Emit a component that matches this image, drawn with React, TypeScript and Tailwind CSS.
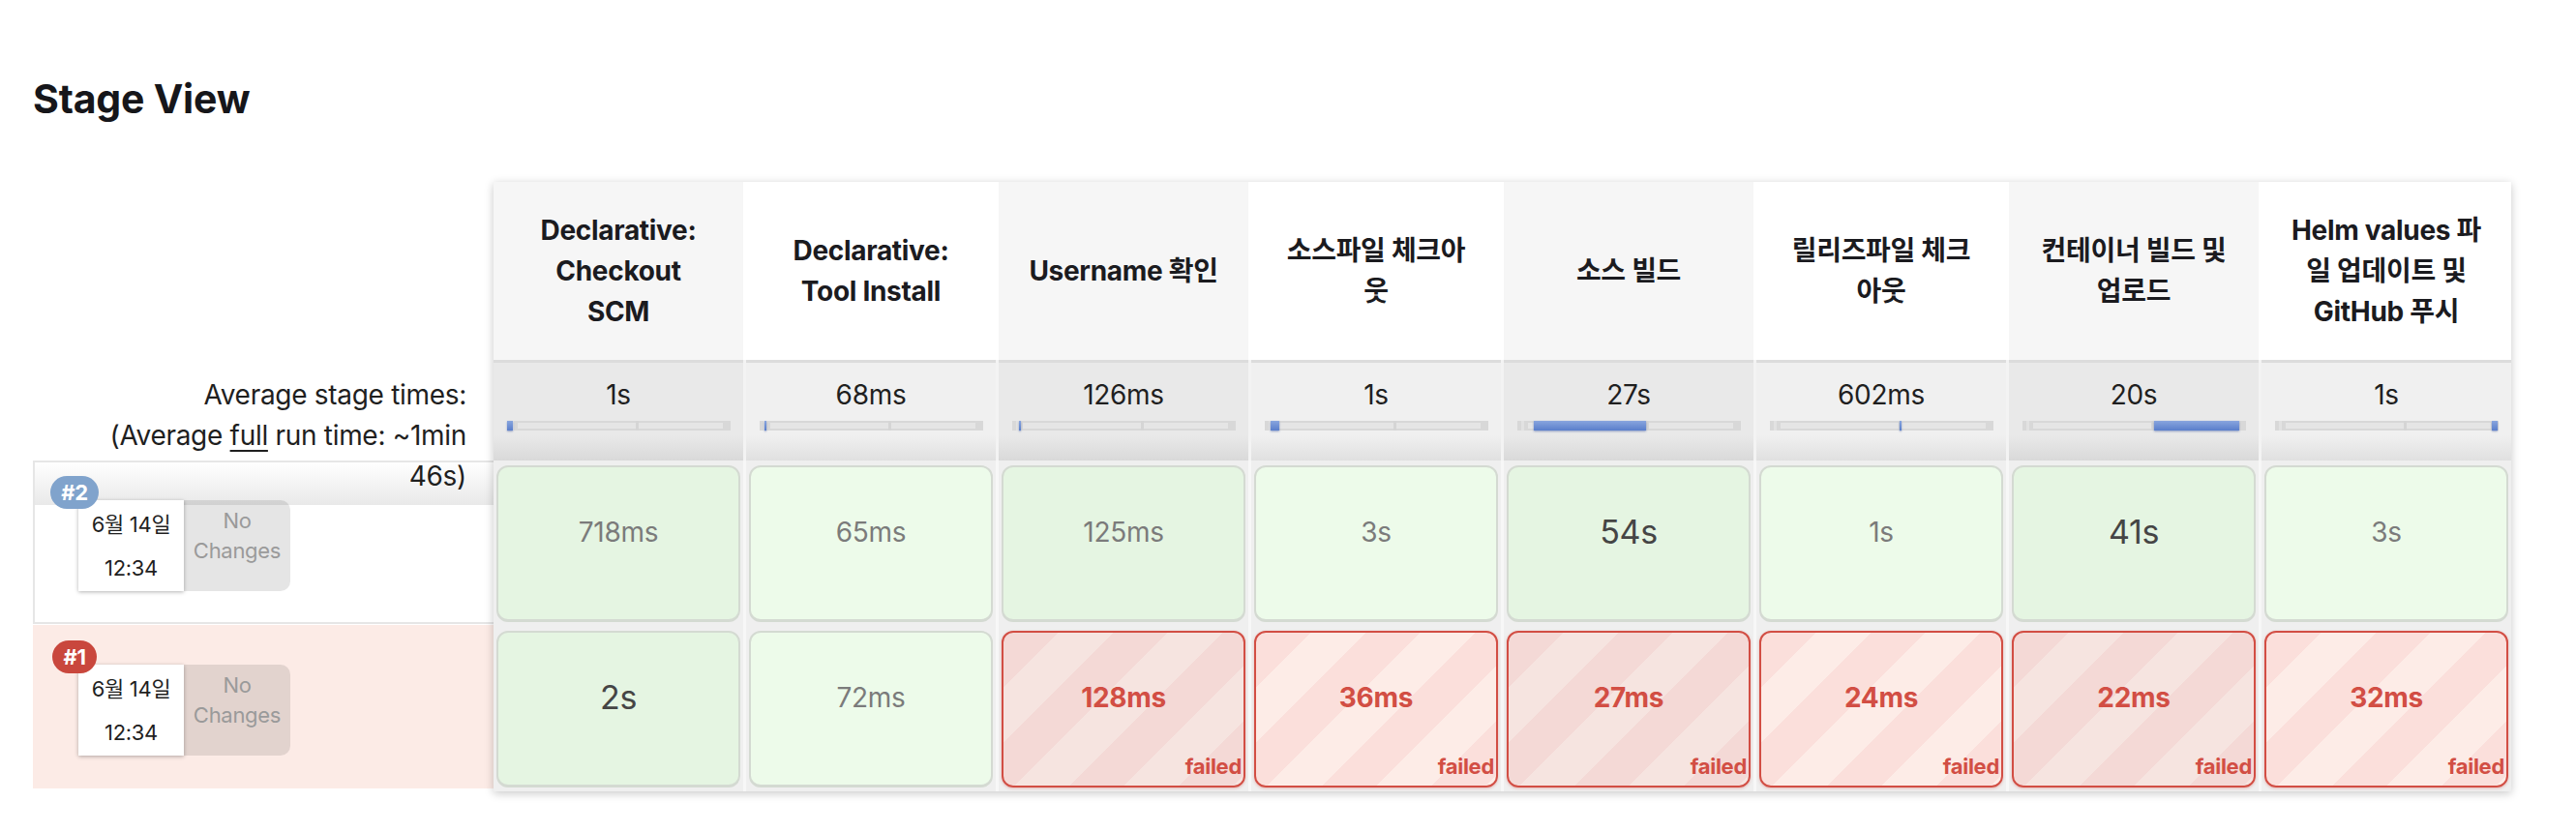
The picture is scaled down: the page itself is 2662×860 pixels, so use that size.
const stages = [
  ["Declarative:", "Checkout", "SCM"],
  ["Declarative:", "Tool Install"],
  ["Username 확인"],
  ["소스파일 체크아", "웃"],
  ["소스 빌드"],
  ["릴리즈파일 체크", "아웃"],
  ["컨테이너 빌드 및", "업로드"],
  ["Helm values 파", "일 업데이트 및", "GitHub 푸시"],
];

const averages = ["1s", "68ms", "126ms", "1s", "27s", "602ms", "20s", "1s"];

// [left %, width %] of the blue part of each average bar
const bars: [number, number][] = [
  [0, 2.6],
  [2.5, 0.8],
  [3.2, 0.8],
  [2.7, 3.8],
  [7.5, 50.2],
  [58.3, 0.9],
  [59, 38.2],
  [97, 3],
];

type Cell = { time: string; status: "ok" | "failed"; big?: boolean };

const builds: { id: string; failed: boolean; cells: Cell[] }[] = [
  {
    id: "#2",
    failed: false,
    cells: [
      { time: "718ms", status: "ok" },
      { time: "65ms", status: "ok" },
      { time: "125ms", status: "ok" },
      { time: "3s", status: "ok" },
      { time: "54s", status: "ok", big: true },
      { time: "1s", status: "ok" },
      { time: "41s", status: "ok", big: true },
      { time: "3s", status: "ok" },
    ],
  },
  {
    id: "#1",
    failed: true,
    cells: [
      { time: "2s", status: "ok", big: true },
      { time: "72ms", status: "ok" },
      { time: "128ms", status: "failed" },
      { time: "36ms", status: "failed" },
      { time: "27ms", status: "failed" },
      { time: "24ms", status: "failed" },
      { time: "22ms", status: "failed" },
      { time: "32ms", status: "failed" },
    ],
  },
];

function AvgBar({ left, width }: { left: number; width: number }) {
  return (
    <div className="relative mx-auto h-[10px] w-[231px] bg-[#d8d8d8]">
      <div className="absolute inset-y-[2px] left-[11px] right-[8px] bg-[#e5e5e5]" />
      <div className="absolute inset-y-0 left-[4px] w-[3px] bg-[#e2e2e2]" />
      <div className="absolute inset-y-0 left-[58%] w-[3px] bg-[#d5d5d5]" />
      <div
        className="absolute inset-y-0 bg-[linear-gradient(to_bottom,#88a5de,#5a7ecb)] shadow-[0_1px_2px_rgba(40,70,150,0.45)]"
        style={{ left: `${left}%`, width: `${width}%` }}
      />
    </div>
  );
}

function StageCell({ cell, odd }: { cell: Cell; odd: boolean }) {
  if (cell.status === "failed") {
    return (
      <div
        className={`mx-[3px] mt-[5px] flex h-[162px] flex-col rounded-[12px] border-2 border-[#d24e44] shadow-[0_1px_3px_rgba(210,78,68,0.35)] ${
          odd
            ? "bg-[repeating-linear-gradient(135deg,#f4d9d6_0px,#f4d9d6_40px,#f6e4e0_40px,#f6e4e0_80px)]"
            : "bg-[repeating-linear-gradient(135deg,#fbdfdb_0px,#fbdfdb_40px,#fdece7_40px,#fdece7_80px)]"
        }`}>
        <p className="pt-[47px] text-center text-[28px] leading-[40px] font-bold text-[#d24e44]">
          {cell.time}
        </p>
        <p className="mt-auto self-end pb-[7px] pr-[2px] text-[22px] leading-[26px] font-bold text-[#d24e44]">
          failed
        </p>
      </div>
    );
  }
  return (
    <div
      className={`mx-[3px] mt-[5px] h-[162px] rounded-[12px] border-2 border-b-[3px] border-[#d4dad2] ${
        odd ? "bg-[#e5f5e2]" : "bg-[#edfbea]"
      }`}>
      <p
        className={`pt-[47px] text-center leading-[40px] ${
          cell.big ? "text-[34px] text-[#454545]" : "text-[28px] text-[#7b7b7b]"
        }`}>
        {cell.time}
      </p>
    </div>
  );
}

function BuildLabel({ id, failed }: { id: string; failed: boolean }) {
  return (
    <div
      className={`h-[169px] border-2 border-r-0 ${
        failed
          ? "mt-[1px] border-transparent bg-[#fcebe6]"
          : "border-[#e6e6e6] bg-[linear-gradient(to_bottom,#ffffff,#e9e9e9_44px,#ffffff_44px)]"
      }`}>
      <div className="flex flex-col pl-[45px] pt-[14px]">
        <div className="relative z-10 -ml-[36px] flex w-[64px] justify-center">
          <span
            className={`rounded-full px-[11px] text-[22px] leading-[34px] font-bold text-white ${
              failed ? "bg-[#c9473d]" : "bg-[#80a3cc]"
            }`}>
            {id}
          </span>
        </div>
        <div className="-mt-[9px] flex">
          <div className="relative z-[1] flex h-[94px] w-[109px] flex-col items-center bg-white pt-[3px] text-[22px] leading-[45px] text-[#1f1f1f] shadow-[0_1px_4px_rgba(0,0,0,0.3)]">
            <span>6월 14일</span>
            <span>12:34</span>
          </div>
          <div className="flex h-[94px] w-[110px] flex-col items-center rounded-r-[10px] bg-black/10 pt-[6px] text-[22px] leading-[31px] text-[#9a9a9a]">
            <span>No</span>
            <span>Changes</span>
          </div>
        </div>
      </div>
    </div>
  );
}

export default function App() {
  return (
    <div className="h-[860px] w-[2662px] bg-white font-[Inter,'Noto_Sans_CJK_KR',sans-serif] tracking-[-0.3px] text-[#222]">
      <div className="pl-[34px] pt-[78px]">
        <h2 className="text-[41px] leading-[48px] font-bold tracking-[-0.2px] text-[#16161a]">
          Stage View
        </h2>
      </div>

      <div className="mt-[62px] flex pl-[34px]">
        {/* left column: averages label and build labels */}
        <div className="w-[476px] pt-[190px]">
          <div className="h-[98px] pr-[28px] pt-[9px] text-right text-[28px] leading-[42px] text-[#1f1f1f]">
            Average stage times:
            <br />
            (Average <span className="underline underline-offset-[5px]">full</span> run time: ~1min
            <br />
            46s)
          </div>
          {builds.map((b) => (
            <BuildLabel key={b.id} id={b.id} failed={b.failed} />
          ))}
        </div>

        {/* stage table */}
        <div className="w-[2085px] shadow-[0_2px_9px_rgba(0,0,0,0.22)]">
          <div className="grid grid-cols-8 gap-[3px] bg-white">
            {stages.map((lines, i) => (
              <div
                key={i}
                className={`flex h-[184px] flex-col items-center justify-center text-center text-[28px] leading-[42px] font-bold text-[#1b1b1f] ${
                  i % 2 === 0 ? "bg-[#f6f6f6]" : "bg-white"
                }`}>
                {lines.map((l) => (
                  <span key={l}>{l}</span>
                ))}
              </div>
            ))}
          </div>

          <div className="grid grid-cols-8 gap-[3px] bg-[#f3f3f3]">
            {averages.map((t, i) => (
              <div
                key={i}
                className={`h-[104px] border-t-[3px] border-[#dcdcdc] ${
                  i % 2 === 0
                    ? "bg-[linear-gradient(to_bottom,#e9e9e9,#e9e9e9_75px,#d9d9d9)]"
                    : "bg-[linear-gradient(to_bottom,#f0f0f0,#f0f0f0_75px,#e0e0e0)]"
                }`}>
                <p className="pt-[13px] text-center text-[28px] leading-[40px] text-[#1f1f1f]">{t}</p>
                <div className="mt-[7px]">
                  <AvgBar left={bars[i][0]} width={bars[i][1]} />
                </div>
              </div>
            ))}
          </div>

          {builds.map((b) => (
            <div key={b.id} className="grid grid-cols-8 gap-[3px] bg-[#f7f7f7]">
              {b.cells.map((c, i) => (
                <div key={i} className="h-[171px] bg-[#efefef]">
                  <StageCell cell={c} odd={i % 2 === 0} />
                </div>
              ))}
            </div>
          ))}
        </div>
      </div>
    </div>
  );
}
